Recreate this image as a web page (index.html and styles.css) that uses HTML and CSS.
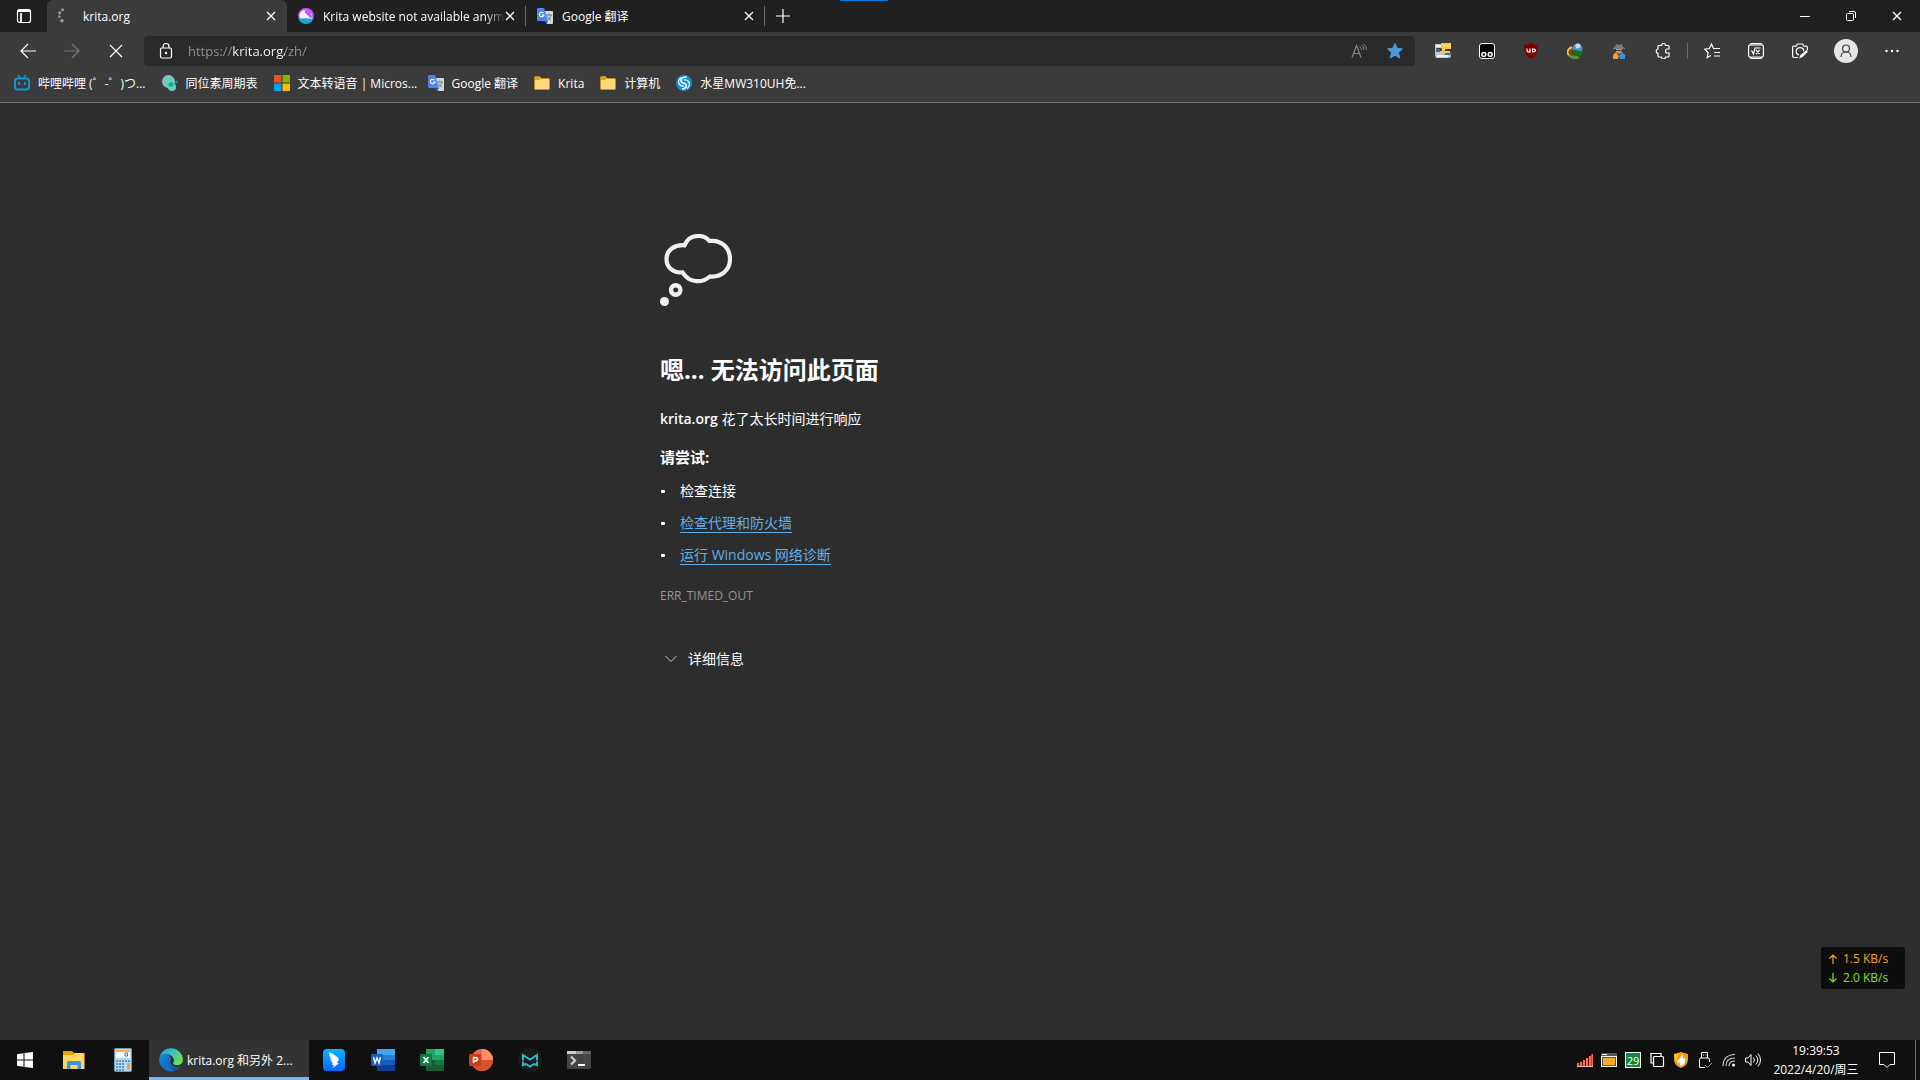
FILE: index.html
```
<!DOCTYPE html>
<html lang="zh-CN">
<head>
    <meta charset="UTF-8">
    <meta name="viewport" content="width=device-width, initial-scale=1.0">
    <title>krita.org</title>
    <link rel="stylesheet" href="styles.css">
</head>
<body>

    <!-- Shared icons -->
    <svg class="defs" aria-hidden="true">
        <symbol id="close" viewBox="0 0 10 10"><path d="M1 1l8 8M9 1l-8 8" stroke="currentColor" stroke-width="1.3" fill="none"/></symbol>
        <symbol id="folder" viewBox="0 0 16 16"><path d="M.5 2.500a1 1 0 0 1 1-1h4l2 2h7a1 1 0 0 1 1 1v9a1 1 0 0 1-1 1h-13a1 1 0 0 1-1-1z" fill="#ffd977" stroke="#c1912a"/><path d="M1 2h4.500l1.500 1.500L5.500 5H1z" fill="#d9a520"/></symbol>
        <symbol id="translate" viewBox="0 0 16 16"><path d="M6 3h9a1 1 0 0 1 1 1v11a1 1 0 0 1-1 1h-5z" fill="#d5d8dc"/><path d="M9 7h6M12 5.500V7M14 7c-.5 2.500-2 4-3.500 5M10.500 8.500c1 2 2 3 3.500 3.500" stroke="#6d7c85" fill="none"/><path d="M1 0h6l4 13H1a1 1 0 0 1-1-1V1a1 1 0 0 1 1-1z" fill="#4a86ee"/><path d="M7.500 13H11l-1.500 3z" fill="#3266c4"/><path d="M6.500 5A2.300 2.300 0 1 0 7 7H4.800" stroke="#fff" stroke-width="1.100" fill="none"/></symbol>
    </svg>

    <header class="browser">
        <div class="tab-bar">
            <button class="tab-menu" aria-label="标签页菜单">
                <svg width="16" height="16" viewBox="0 0 16 16"><rect x="1.500" y="1.500" width="13" height="13" rx="2" fill="none" stroke="#fff" stroke-width="1.200"/><path d="M2 3h12M5 5v9" stroke="#fff" stroke-width="1.800"/></svg>
            </button>
            <div class="tab active">
                <svg width="16" height="16" viewBox="0 0 16 16"><g fill="#9c9c9c"><circle cx="4.500" cy="1.800" r="1.500"/><circle cx="1.700" cy="4.800" r="1.600"/><circle cx="1.300" cy="8.500" r="1.300"/><circle cx="4" cy="12.800" r="1.700"/></g></svg>
                <span class="tab-title">krita.org</span>
                <button class="tab-close" aria-label="关闭"><svg width="10" height="10"><use href="#close"/></svg></button>
            </div>
            <div class="tab">
                <svg width="16" height="16" viewBox="0 0 16 16"><defs><linearGradient id="kr" x1="0" y1="0" x2="0" y2="1"><stop offset="0" stop-color="#d958f5"/><stop offset=".5" stop-color="#8d63ef"/><stop offset="1" stop-color="#00b7c6"/></linearGradient></defs><circle cx="8" cy="8" r="8" fill="url(#kr)"/><path d="M1.500 9C1 4 5 1.500 8 2.500l-1 1.500 6 6 1-1-2-5q3 3 2 7H3q-1-1-1.500-2z" fill="#f7efff"/><path d="M8 2.500l5.500 6.500-1 1-6-6z" fill="#d34dea"/><path d="M1 11c4-1 9-1 14 0a8 8 0 0 1-14 0z" fill="#17a8c9"/></svg>
                <span class="tab-title faded">Krita website not available anym</span>
                <button class="tab-close" aria-label="关闭"><svg width="10" height="10"><use href="#close"/></svg></button>
            </div>
            <div class="tab">
                <svg width="16" height="16"><use href="#translate"/></svg>
                <span class="tab-title">Google 翻译</span>
                <button class="tab-close" aria-label="关闭"><svg width="10" height="10"><use href="#close"/></svg></button>
            </div>
            <button class="new-tab" aria-label="新建标签页"><svg width="14" height="14" viewBox="0 0 14 14"><path d="M7 0v14M0 7h14" stroke="#fff" stroke-width="1.200"/></svg></button>
            <div class="window-buttons">
                <button aria-label="最小化"><svg width="10" height="10" viewBox="0 0 10 10"><path d="M0 5.500h10" stroke="#fff"/></svg></button>
                <button aria-label="还原"><svg width="10" height="10" viewBox="0 0 10 10"><rect x=".5" y="2.500" width="7" height="7" rx="1" fill="none" stroke="#fff"/><path d="M3 .5h5a1.500 1.500 0 0 1 1.500 1.500v5" fill="none" stroke="#fff"/></svg></button>
                <button aria-label="关闭窗口"><svg width="10" height="10"><use href="#close"/></svg></button>
            </div>
            <span class="top-mark"></span>
        </div>

        <div class="toolbar">
            <button class="nav" aria-label="后退"><svg width="16" height="16" viewBox="0 0 16 16"><path d="M16 8H1M8 1L1 8l7 7" fill="none" stroke="#fff" stroke-width="1.200"/></svg></button>
            <button class="nav" aria-label="前进"><svg width="16" height="16" viewBox="0 0 16 16"><path d="M0 8h15M8 1l7 7-7 7" fill="none" stroke="#777" stroke-width="1.200"/></svg></button>
            <button class="nav" aria-label="停止"><svg width="14" height="14" viewBox="0 0 14 14"><path d="M1 1l12 12M13 1L1 13" stroke="#fff" stroke-width="1.100"/></svg></button>
            <div class="address-bar">
                <svg class="lock" width="16" height="16" viewBox="0 0 16 16"><rect x="2.500" y="5" width="11" height="10" rx="1.500" fill="none" stroke="#fff" stroke-width="1.200"/><path d="M5 5V3.500a3 3 0 0 1 6 0V5" fill="none" stroke="#fff" stroke-width="1.200"/><circle cx="8" cy="10" r="1.200" fill="#fff"/></svg>
                <input class="address" type="text" value="https://krita.org/zh/" aria-label="地址栏" spellcheck="false">
                <button aria-label="大声朗读"><svg width="16" height="16" viewBox="0 0 16 16"><path d="M1 14.500L5.500 2.500 10 14.500M2.500 10.500h6" fill="none" stroke="#858585" stroke-width="1.200"/><path d="M8.500 3.500q2 1 2 3.500M10.500 2q2.500 1.500 2.500 5M12.500.8q3 2 3 6" fill="none" stroke="#858585"/></svg></button>
                <button aria-label="收藏"><svg width="16" height="16" viewBox="0 0 16 16"><path d="M8 .5l2.200 4.800 5.300.6-3.900 3.600 1 5.500L8 12.200 3.400 15l1-5.500L.5 5.900l5.300-.6z" fill="#4a9ad9" stroke="#4a9ad9" stroke-linejoin="round"/></svg></button>
            </div>
            <button class="tool" aria-label="下载助手"><svg width="16" height="16" viewBox="0 0 16 16"><path d="M0 1h7v4H1.500v3H15l1 6-2 1H1l-1-3z" fill="#b8cad8"/><path d="M1 6h4v3H1zM9 10h6v2H9z" fill="#426c96"/><path d="M1 2h5v2H1zM2 12h11v2H2z" fill="#eef2f5"/><path d="M6 0h10v6H10v3h2l-3.500 3L5 9h2z" fill="#fcc63e"/><path d="M8 2h1v2M11 2h1v2M14 2h1v2" stroke="#fbe6ad" fill="none"/></svg></button>
            <button class="tool" aria-label="篡改猴"><svg width="16" height="16" viewBox="0 0 16 16"><rect x=".5" y=".5" width="15" height="15" rx="2.500" fill="#000" stroke="#fff"/><circle cx="4.800" cy="11.500" r="2" fill="#222" stroke="#fff" stroke-width="1.400"/><circle cx="11.200" cy="11.500" r="2" fill="#222" stroke="#fff" stroke-width="1.400"/></svg></button>
            <button class="tool" aria-label="uBlock"><svg width="16" height="16" viewBox="0 0 16 16"><path d="M8 0q3 2 7 2 0 11-7 14Q1 13 1 2q4 0 7-2z" fill="#800000"/><path d="M4 5.500v2q0 1.300 1.500 1.300H7V5.500M9.500 6v2.800q3 0 3-1.500T9.500 6z" fill="none" stroke="#fff" stroke-width="1.200"/></svg></button>
            <button class="tool" aria-label="IDM"><svg width="16" height="16" viewBox="0 0 16 16"><path d="M5 4q-6 3-4 7 3 5 11 3" fill="none" stroke="#f0c328" stroke-width="2"/><path d="M6 6q-4 2-2 5 2 2 6 2" fill="none" stroke="#c93124" stroke-width="1.500"/><path d="M2 12q3 4 9 2" fill="none" stroke="#25a74a" stroke-width="2"/><circle cx="10.500" cy="5.500" r="5" fill="#518dd2"/><circle cx="11" cy="3" r="2.500" fill="#c4dcdc"/><path d="M6 6.500l9 2 1 1.500-5 5v-3L5 10z" fill="#087a17"/></svg></button>
            <button class="tool" aria-label="隐私助手"><svg width="16" height="16" viewBox="0 0 16 16"><path d="M5 1l3 1 3-1 1 3 2 1v1H2V5l2-1z" fill="#737b80"/><path d="M5 6h6v3l-3 2-3-2z" fill="#d19a69"/><path d="M5 7h6v1H5z" fill="#444"/><path d="M5 9l3 4-1 3H2v-4z" fill="#f59b38"/><path d="M11 9l-3 4 1 3h5v-4z" fill="#3593e9"/></svg></button>
            <button class="tool" aria-label="扩展"><svg width="16" height="16" viewBox="0 0 16 16"><path d="M4 2.500h2.500a2 2 0 0 1 4 0H13q1 0 1 1V6h-1.500a2 2 0 0 0 0 4H14v3q0 1-1 1h-2.500a2 2 0 0 1-4 0H4q-1 0-1-1v-2.500a2.300 2.300 0 0 1 0-4.500V3.500q0-1 1-1z" fill="none" stroke="#fff" stroke-width="1.200"/></svg></button>
            <span class="divider"></span>
            <button class="tool" aria-label="收藏夹"><svg width="16" height="16" viewBox="0 0 16 16"><path d="M9.500 5.500L7.500 1 5.300 5.500.7 6.200 4 9.500l-.8 5L7 12.300M7.500 1l2 4.500h6.500M10 9.500h6M10 13h6" fill="none" stroke="#fff" stroke-width="1.200"/></svg></button>
            <button class="tool" aria-label="数学求解器"><svg width="16" height="16" viewBox="0 0 16 16"><rect x=".6" y="2" width="14.800" height="12" rx="1.500" fill="none" stroke="#fff" stroke-width="1.200"/><path d="M2 2q0-1.400 1.500-1.400h9Q14 .6 14 2M2 14q0 1.400 1.500 1.400h9Q14 15.400 14 14M3 8h1l1.500 3L7 5h5.500M8 7l3.500 4M11.500 7L8 11" fill="none" stroke="#fff" stroke-width="1.200"/></svg></button>
            <button class="tool" aria-label="网页捕获"><svg width="16" height="16" viewBox="0 0 16 16"><path d="M6 14.500H2q-1.400 0-1.400-1.400V4.500Q.6 3.200 2 3.200h2L5.500 1h5L12 3.200h2q1.400 0 1.400 1.300V7M7 12A3.800 3.800 0 1 1 11.800 8" fill="none" stroke="#fff" stroke-width="1.200"/><path d="M14.500 7q2 1 .8 2.300L10.500 14 7 15.500 8.500 12z" fill="#fff"/></svg></button>
            <button class="avatar" aria-label="用户"><svg width="12" height="14" viewBox="0 0 12 14"><circle cx="6" cy="4.500" r="3.500" fill="none" stroke="#444" stroke-width="1.200"/><path d="M1 13q0-5 5-5t5 5" fill="none" stroke="#444" stroke-width="1.200"/></svg></button>
            <button class="tool more" aria-label="设置及其他"><svg width="16" height="16" viewBox="0 0 16 16"><g fill="#fff"><circle cx="2.500" cy="8" r="1.200"/><circle cx="8" cy="8" r="1.200"/><circle cx="13.500" cy="8" r="1.200"/></g></svg></button>
        </div>

        <nav class="bookmarks">
            <a href="#"><svg width="16" height="16" viewBox="0 0 16 16"><rect x="1" y="3.500" width="14" height="11" rx="2.500" fill="none" stroke="#1296cf" stroke-width="2"/><path d="M4 0l2.500 3M12 0L9.500 3M5 7v3M11 7v3" stroke="#1296cf" stroke-width="1.800"/></svg>哔哩哔哩 (゜-゜)つ...</a>
            <a href="#"><svg width="16" height="16" viewBox="0 0 16 16"><circle cx="6.500" cy="6.500" r="6.500" fill="#73cabd"/><circle cx="10" cy="12" r="4" fill="#73cabd"/><circle cx="9" cy="9.500" r="2.500" fill="#00b3a1"/><circle cx="14.500" cy="7" r="1.300" fill="#2c9186"/></svg>同位素周期表</a>
            <a href="#"><svg width="16" height="16" viewBox="0 0 16 16"><path d="M0 0h7.500v7.500H0z" fill="#f25022"/><path d="M8.500 0H16v7.500H8.500z" fill="#7fba00"/><path d="M0 8.500h7.500V16H0z" fill="#00a4ef"/><path d="M8.500 8.500H16V16H8.500z" fill="#ffb900"/></svg>文本转语音 | Micros...</a>
            <a href="#"><svg width="16" height="16"><use href="#translate"/></svg>Google 翻译</a>
            <a href="#"><svg width="16" height="16"><use href="#folder"/></svg>Krita</a>
            <a href="#"><svg width="16" height="16"><use href="#folder"/></svg>计算机</a>
            <a href="#"><svg width="16" height="16" viewBox="0 0 16 16"><circle cx="8" cy="8" r="8" fill="#168ed0"/><path d="M10.500 2Q5 2 5 5.500 5.500 8 8.500 8.500 11 9.500 10 12q-1 2-4 2" fill="none" stroke="#f2fbff" stroke-width="1.700"/><path d="M5 2.500Q1 6 3.500 9.500 5 11.500 8 11M11 13.500q4-3.500 1.500-7Q11 4.500 8 5" fill="none" stroke="#d4f1ff" stroke-width="1.300"/></svg>水星MW310UH免...</a>
        </nav>
    </header>

    <main class="page">
        <div class="error">
            <svg class="cloud" width="72" height="72" viewBox="0 0 72 72"><path d="M24.500 11.300C27 5 32.500 2 38.300 2 43 2 47 4 49.500 7 61 5.500 70 13.500 70 25S61 43.500 50 42.500C41 50 29 48.500 22.500 38.300 14 39.500 6.500 34 6.500 25S14.500 10.500 24.500 11.300z" fill="none" stroke="#f0f0f0" stroke-width="4.200"/><circle cx="15.700" cy="56" r="4.700" fill="none" stroke="#f0f0f0" stroke-width="4.400"/><circle cx="4.500" cy="67.500" r="4.500" fill="#f0f0f0"/></svg>
            <h1>嗯… 无法访问此页面</h1>
            <p class="summary"><strong>krita.org</strong> 花了太长时间进行响应</p>
            <h2>请尝试:</h2>
            <ul>
                <li>检查连接</li>
                <li><a href="#">检查代理和防火墙</a></li>
                <li><a href="#">运行 Windows 网络诊断</a></li>
            </ul>
            <p class="code">ERR_TIMED_OUT</p>
            <button class="details"><svg width="12" height="8" viewBox="0 0 12 8"><path d="M.5 1L6 6.500 11.500 1" fill="none" stroke="#c8c8c8"/></svg>详细信息</button>
        </div>
    </main>

    <aside class="net-speed">
        <div class="up"><svg width="8" height="10" viewBox="0 0 8 10"><path d="M4 10V1M.5 4.500L4 1l3.500 3.500" fill="none" stroke="currentColor" stroke-width="1.200"/></svg>1.5 KB/s</div>
        <div class="down"><svg width="8" height="10" viewBox="0 0 8 10"><path d="M4 0v9M.5 5.500L4 9l3.500-3.500" fill="none" stroke="currentColor" stroke-width="1.200"/></svg>2.0 KB/s</div>
    </aside>

    <footer class="taskbar">
        <button class="app" aria-label="开始"><svg width="16" height="16" viewBox="0 0 16 16"><path d="M0 2.200L6.500 1.300v6.200H0zM7.500 1.100L16 0v7.500H7.500zM0 8.500h6.500v6.200L0 13.800zM7.500 8.500H16V16l-8.500-1.100z" fill="#fff"/></svg></button>
        <button class="app" aria-label="文件资源管理器"><svg width="22" height="18" viewBox="0 0 22 18"><path d="M0 0h9l2 2h10v16H0z" fill="#e3a008"/><path d="M0 4h10l2-2h9.500v16H0z" fill="#ffd564"/><path d="M4 18v-6q0-2 2-2h10q2 0 2 2v6h-3.500v-4h-7v4z" fill="#3b95db"/></svg></button>
        <button class="app" aria-label="计算器"><svg width="18" height="24" viewBox="0 0 18 24"><rect x=".5" y=".5" width="17" height="23" rx="1" fill="#b9d8ed" stroke="#6b9cbe"/><path d="M2 2h14v2H2z" fill="#f5b13c"/><path d="M2 4h14v6H2z" fill="#f2f8fc"/><path d="M11 5h2.500v3H11z" fill="none" stroke="#597892"/><path d="M2 13h14M2 16h9M2 19h9M2 22h9" stroke="#5c96c2" stroke-width="2" stroke-dasharray="2 1"/><path d="M13 15h3v7h-3z" fill="#f3a33b"/></svg></button>
        <button class="task-active">
            <svg width="24" height="24" viewBox="0 0 24 24"><defs><linearGradient id="eg" x1="0" y1="0" x2="1" y2=".5"><stop offset="0" stop-color="#239ed8"/><stop offset=".5" stop-color="#35c1c7"/><stop offset="1" stop-color="#6bdc58"/></linearGradient><linearGradient id="eb" x1="0" y1="0" x2="1" y2="1"><stop offset="0" stop-color="#168edb"/><stop offset="1" stop-color="#104a9e"/></linearGradient></defs><path d="M0 12a12 12 0 0 0 22 6q-5 2.500-9-1-3-3-1-6-1-5-6-5-5 0-6 6z" fill="url(#eb)"/><path d="M.5 9A12 12 0 0 1 24 11q0 6-6 6-4 0-4-2 1-1 1-3-1-5-7-6Q3 6 .5 9z" fill="url(#eg)"/><path d="M8 12q0 9 8 11Q5 25 5 14q0-4 4-6-1 1-1 4z" fill="#1474c9"/></svg>
            krita.org 和另外 2...
        </button>
        <button class="app" aria-label="钉钉"><svg width="22" height="22" viewBox="0 0 22 22"><defs><linearGradient id="dt" x2="0" y2="1"><stop stop-color="#0ab4ff"/><stop offset="1" stop-color="#0668ff"/></linearGradient></defs><rect width="22" height="22" rx="4" fill="url(#dt)"/><path d="M6 3q7 3 10 7l-2 4h2l-6 5 1-3H9l1-2-2-1 1-1-2-2 1-.5Q6 7 6 3z" fill="#fff"/></svg></button>
        <button class="app" aria-label="Word"><svg width="24" height="22" viewBox="0 0 24 22"><path d="M6 0h18v6H6z" fill="#41a5ee"/><path d="M6 6h18v5H6z" fill="#2b7cd3"/><path d="M6 11h18v5H6z" fill="#185abd"/><path d="M6 16h18v6H6z" fill="#103f91"/><rect y="5" width="12" height="12" rx="1" fill="#185abd"/><path d="M2.500 8l1.500 6L6 9l2 5 1.500-6" fill="none" stroke="#fff" stroke-width="1.400"/></svg></button>
        <button class="app" aria-label="Excel"><svg width="24" height="22" viewBox="0 0 24 22"><path d="M6 0h9v11H6z" fill="#21a366"/><path d="M15 0h9v6h-9z" fill="#33c481"/><path d="M15 6h9v5h-9z" fill="#21a366"/><path d="M6 11h9v5H6z" fill="#185c37"/><path d="M15 11h9v5h-9z" fill="#107c41"/><path d="M6 16h18v6H6z" fill="#185c37"/><rect y="5" width="12" height="12" rx="1" fill="#107c41"/><path d="M3.500 8l5 6M8.500 8l-5 6" stroke="#fff" stroke-width="1.700"/></svg></button>
        <button class="app" aria-label="PowerPoint"><svg width="24" height="22" viewBox="0 0 24 22"><circle cx="13" cy="11" r="11" fill="#ed6c47"/><path d="M13 0a11 11 0 0 1 11 11H13z" fill="#ff8f6b"/><path d="M2 11h22a11 11 0 0 1-22 0z" fill="#d35230"/><rect y="5" width="12" height="12" rx="1" fill="#c43e1c"/><path d="M4.500 14V8.500H6q2.500 0 2.500 1.700T6 12H4.500" fill="none" stroke="#fff" stroke-width="1.500"/></svg></button>
        <button class="app" aria-label="MarkText"><svg width="24" height="24" viewBox="0 0 24 24"><circle cx="12" cy="12" r="12" fill="#1c1c1c"/><path d="M5 12.500V7l7 4.500L19 7v5.500M5 13.500V17l3-1 4 2.500 4-2.500 3 1v-3.500" fill="none" stroke="#31b6cf" stroke-width="2"/></svg></button>
        <button class="app" aria-label="终端"><svg width="24" height="18" viewBox="0 0 24 18"><rect width="24" height="18" rx="1" fill="#444"/><path d="M0 0h9v3H0z" fill="#ccc"/><path d="M9 0h7v3H9z" fill="#999"/><path d="M16 0h8v3h-8z" fill="#666"/><path d="M4 5.500l4 4-4 4" fill="none" stroke="#ccc" stroke-width="2.200"/><path d="M11 14h7" stroke="#fff" stroke-width="2"/></svg></button>

        <div class="tray">
            <button aria-label="信号"><svg width="16" height="16" viewBox="0 0 16 16"><path d="M1 14v-3M4 14v-4M7 14V8M10 14V6M13 14V4M15.500 14V2" stroke="#ff6843" stroke-width="2.200"/><path d="M0 14.500h16" stroke="#ffc3b2"/></svg></button>
            <button aria-label="窗口"><svg width="16" height="14" viewBox="0 0 16 14"><path d="M0 0h16v14H0z" fill="#555"/><path d="M1 1h5v1H1zM0 3h16v1H0z" fill="#fff"/><path d="M2 5h12v7H2z" fill="#ffa928"/><path d="M.5 3v10.500h15V3" fill="none" stroke="#fff"/></svg></button>
            <button class="temp">29</button>
            <button aria-label="多窗口"><svg width="16" height="16" viewBox="0 0 16 16"><path d="M4 11H2V1.500h10V4" fill="none" stroke="#fff" stroke-width="1.200"/><rect x="4.500" y="4.500" width="10" height="10" rx="1" fill="none" stroke="#fff" stroke-width="1.200"/></svg></button>
            <button aria-label="火绒"><svg width="14" height="16" viewBox="0 0 14 16"><path d="M7 0l7 2v6q0 5-7 8-7-3-7-8V2z" fill="#f79a16"/><path d="M0 3l5-2-3 9z" fill="#ffc425"/><path d="M8 2q0 3-3 5t-1 5q0-2 2-2-1 3 1 4 5-2 4-8l-2 1q1-3-1-5z" fill="#fff"/></svg></button>
            <button aria-label="USB"><svg width="14" height="16" viewBox="0 0 14 16"><path d="M3.500 6V.5h6V6M1.500 15.500v-8q0-1.500 1.500-1.500h7q1.500 0 1.500 1.500V10M1.500 15.500H7M5 3h1M7.500 3h1" fill="none" stroke="#fff"/><path d="M7 13l2.500 2.500L14 11" fill="none" stroke="#999"/></svg></button>
            <button aria-label="网络"><svg width="14" height="14" viewBox="0 0 14 14"><path d="M1 13Q1 2 13 1.500M4 13q0-8 9-8M7 13q0-5 6-5" fill="none" stroke="#ccc" stroke-width="1.200"/><circle cx="11.500" cy="12" r="1.500" fill="#fff"/></svg></button>
            <button aria-label="音量"><svg width="16" height="14" viewBox="0 0 16 14"><path d="M.5 5v4H3l3 3.500v-11L3 5zM8.500 4.500q2 2.500 0 5M11 2.500q3.500 4.500 0 9M13 .5q5 6.500 0 13" fill="none" stroke="#fff"/></svg></button>
        </div>
        <button class="clock"><span>19:39:53</span><span>2022/4/20/周三</span></button>
        <button class="notify" aria-label="通知"><svg width="16" height="16" viewBox="0 0 16 16"><path d="M.5.5h15v12H11L8 15.500 5 12.500H.5z" fill="none" stroke="#fff"/></svg></button>
        <span class="show-desktop"></span>
    </footer>

</body>
</html>
```

FILE: styles.css
```
* {
    box-sizing: border-box;
}
body {
    margin: 0;
    min-height: 100vh;
    display: flex;
    flex-direction: column;
    background-color: #2d2d2d;
    color: white;
    font-family: "Open Sans", "Noto Sans CJK SC", sans-serif;
    font-size: 12px;
}
button {
    display: flex;
    align-items: center;
    justify-content: center;
    padding: 0;
    border: none;
    background: none;
    color: inherit;
    font: inherit;
    cursor: pointer;
}
svg {
    flex-shrink: 0;
}
a {
    color: inherit;
    text-decoration: none;
}
.defs {
    display: none;
}

/* Tabs */
.browser {
    background-color: #3b3b3b;
    border-bottom: 1px solid #6e6e6e;
}
.tab-bar {
    position: relative;
    display: flex;
    height: 32px;
    background-color: #202020;
}
.tab-menu {
    width: 47px;
}
.tab {
    display: flex;
    align-items: center;
    width: 239px;
    padding: 0 10px 0 11px;
    position: relative;
}
.tab.active {
    width: 240px;
    background-color: #3b3b3b;
    border-radius: 6px 6px 0 0;
}
.tab:not(.active)::after {
    content: "";
    position: absolute;
    right: 0;
    top: 6px;
    bottom: 6px;
    width: 1px;
    background-color: #6a6a6a;
}
.tab-title {
    flex: 1;
    margin-left: 9px;
    white-space: nowrap;
}
.tab-title.faded {
    mask-image: linear-gradient(to right, black 162px, transparent 182px);
}
.tab-close {
    width: 12px;
    height: 20px;
}
.new-tab {
    width: 36px;
}
.window-buttons {
    display: flex;
    margin-left: auto;
}
.window-buttons button {
    width: 46px;
}
.top-mark {
    position: absolute;
    left: 840px;
    top: 0;
    width: 48px;
    height: 1px;
    background-color: #0078d7;
}

/* Toolbar */
.toolbar {
    display: flex;
    align-items: center;
    height: 38px;
    padding: 0 6px;
}
.nav, .tool {
    width: 44px;
    height: 30px;
}
.address-bar {
    flex: 1;
    display: flex;
    align-items: center;
    height: 30px;
    margin: 0 6px;
    padding-right: 2px;
    border-radius: 4px;
    background-color: #2a2a2a;
}
.lock {
    margin: 0 14px;
}
.address {
    flex: 1;
    padding: 0;
    border: none;
    outline: none;
    font-family: inherit;
    font-size: 13px;
    color: transparent;
    background: linear-gradient(to right, #959595 45px, white 45px, white 97px, #959595 97px);
    background-clip: text;
}
.address-bar button {
    width: 36px;
    height: 30px;
}
.divider {
    width: 1px;
    height: 16px;
    margin: 0 2px;
    background-color: #6a6a6a;
}
.avatar {
    width: 24px;
    height: 24px;
    margin: 0 12px;
    border-radius: 50%;
    background-color: #e6e6e6;
}

/* Bookmarks */
.bookmarks {
    display: flex;
    gap: 16px;
    height: 32px;
    padding: 0 14px 6px;
}
.bookmarks a {
    display: flex;
    align-items: center;
    gap: 8px;
    max-width: 138px;
    white-space: nowrap;
}

/* Error page */
.page {
    flex: 1;
}
.error {
    width: 600px;
    margin: 0 auto;
    padding-top: 131px;
    font-size: 14px;
    line-height: 20px;
}
.cloud {
    display: block;
}
h1 {
    margin: 48px 0 0;
    font-size: 24px;
    line-height: 32px;
}
h2 {
    margin: 18px 0 0;
    font-size: 15px;
    line-height: 20px;
}
.summary {
    margin: 23px 0 0;
}
.summary strong {
    font-weight: 600;
}
ul {
    margin: 8px 0 0;
    padding-left: 20px;
    list-style: none;
}
li {
    position: relative;
    line-height: 32px;
}
li::before {
    content: "";
    position: absolute;
    left: -19px;
    top: 15px;
    width: 4px;
    height: 3px;
    border-radius: 1px;
    background-color: white;
}
li a {
    border-bottom: 1px solid #63ade5;
    color: #63ade5;
}
.code {
    margin: 15px 0 0;
    font-size: 12px;
    color: #959595;
}
.details {
    gap: 11px;
    margin-top: 43px;
    padding-left: 5px;
}

/* Network speed overlay */
.net-speed {
    position: fixed;
    right: 15px;
    bottom: 91px;
    width: 84px;
    height: 42px;
    padding: 2px 8px;
    border-radius: 3px;
    background-color: #0d0d0d;
    font-size: 12px;
    line-height: 19px;
}
.net-speed div {
    display: flex;
    align-items: center;
    gap: 6px;
}
.up {
    color: #f5a623;
}
.down {
    color: #7ee52d;
}

/* Taskbar */
.taskbar {
    display: flex;
    height: 40px;
    background-color: #101010;
}
.app {
    width: 49px;
}
.task-active {
    justify-content: flex-start;
    gap: 4px;
    width: 160px;
    margin-left: 2px;
    padding: 3px 10px 0;
    border-bottom: 3px solid #76b9ed;
    background-color: #333;
    white-space: nowrap;
}
.tray {
    display: flex;
    margin-left: auto;
}
.tray button {
    width: 24px;
}
.tray .temp {
    align-self: center;
    width: 16px;
    height: 16px;
    margin: 0 4px;
    border: 1px solid white;
    background-color: #10893e;
    font-size: 11px;
}
.clock {
    flex-direction: column;
    width: 102px;
    line-height: 19px;
}
.notify {
    width: 40px;
}
.show-desktop {
    width: 5px;
    margin-left: 8px;
    border-left: 1px solid #6a6a6a;
}
```
